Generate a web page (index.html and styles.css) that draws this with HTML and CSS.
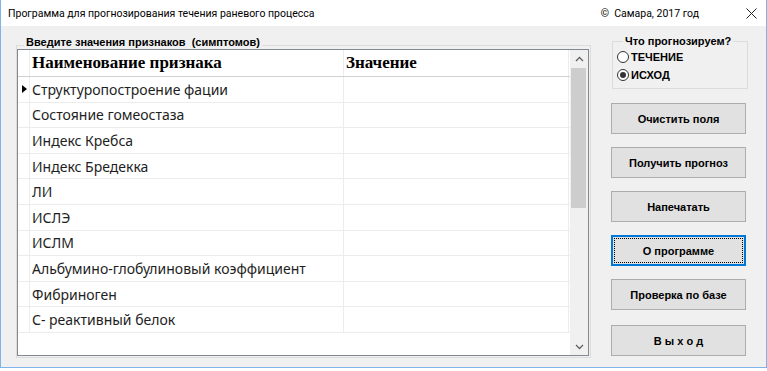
FILE: index.html
```html
<!DOCTYPE html>
<html lang="ru">
<head>
    <meta charset="UTF-8">
    <title>Программа для прогнозирования течения раневого процесса</title>
    <link rel="stylesheet" href="styles.css">
</head>
<body>
<div class="window">
    <div class="titlebar">
        <span class="title">Программа для прогнозирования течения раневого процесса</span>
        <span class="copy">©&nbsp; Самара, 2017 год</span>
        <span class="close">
            <svg width="11" height="11" viewBox="0 0 11 11"><path d="M0.5 0.5 L10.5 10.5 M10.5 0.5 L0.5 10.5" stroke="#222" stroke-width="1"/></svg>
        </span>
    </div>
    <div class="client">
        <fieldset class="group data-group">
            <legend>Введите значения признаков &nbsp;(симптомов)</legend>
            <div class="grid">
                <div class="grid-body">
                    <div class="row head">
                        <div class="ind"></div>
                        <div class="c1">Наименование признака</div>
                        <div class="c2">Значение</div>
                    </div>
                    <div class="row current">
                        <div class="ind"><span class="marker"></span></div>
                        <div class="c1">Структуропостроение фации</div>
                        <div class="c2"></div>
                    </div>
                    <div class="row">
                        <div class="ind"></div>
                        <div class="c1">Состояние гомеостаза</div>
                        <div class="c2"></div>
                    </div>
                    <div class="row">
                        <div class="ind"></div>
                        <div class="c1">Индекс Кребса</div>
                        <div class="c2"></div>
                    </div>
                    <div class="row">
                        <div class="ind"></div>
                        <div class="c1">Индекс Бредекка</div>
                        <div class="c2"></div>
                    </div>
                    <div class="row">
                        <div class="ind"></div>
                        <div class="c1">ЛИ</div>
                        <div class="c2"></div>
                    </div>
                    <div class="row">
                        <div class="ind"></div>
                        <div class="c1">ИСЛЭ</div>
                        <div class="c2"></div>
                    </div>
                    <div class="row">
                        <div class="ind"></div>
                        <div class="c1">ИСЛМ</div>
                        <div class="c2"></div>
                    </div>
                    <div class="row">
                        <div class="ind"></div>
                        <div class="c1">Альбумино-глобулиновый коэффициент</div>
                        <div class="c2"></div>
                    </div>
                    <div class="row">
                        <div class="ind"></div>
                        <div class="c1">Фибриноген</div>
                        <div class="c2"></div>
                    </div>
                    <div class="row">
                        <div class="ind"></div>
                        <div class="c1">С- реактивный белок</div>
                        <div class="c2"></div>
                    </div>
                </div>
                <div class="scrollbar">
                    <div class="arrow">
                        <svg width="9" height="6" viewBox="0 0 9 6"><path d="M1 5 L4.5 1.5 L8 5" fill="none" stroke="#606060" stroke-width="1.3"/></svg>
                    </div>
                    <div class="track"><div class="thumb"></div></div>
                    <div class="arrow">
                        <svg width="9" height="6" viewBox="0 0 9 6"><path d="M1 1 L4.5 4.5 L8 1" fill="none" stroke="#606060" stroke-width="1.3"/></svg>
                    </div>
                </div>
            </div>
        </fieldset>

        <div class="side">
            <fieldset class="group mode">
                <legend>Что прогнозируем?</legend>
                <label class="radio"><span class="dot"></span>ТЕЧЕНИЕ</label>
                <label class="radio checked"><span class="dot"></span>ИСХОД</label>
            </fieldset>
            <div class="buttons">
                <button class="btn">Очистить поля</button>
                <button class="btn">Получить прогноз</button>
                <button class="btn">Напечатать</button>
                <button class="btn focus"><span>О программе</span></button>
                <button class="btn">Проверка по базе</button>
                <button class="btn exit">В ы х о д</button>
            </div>
        </div>
    </div>
</div>
</body>
</html>
```

FILE: styles.css
```css
* {
    margin: 0;
    padding: 0;
    box-sizing: border-box;
}

body {
    background: #fff;
    font-family: "Liberation Sans", Arial, sans-serif;
}

.window {
    width: 767px;
    height: 368px;
    border: 1px solid #7eb4ea;
    border-top: none;
    display: flex;
    flex-direction: column;
}

/* заголовок окна */
.titlebar {
    height: 26px;
    background: #fff;
    display: flex;
    align-items: center;
    font-family: Roboto, sans-serif;
    font-size: 10.5px;
    color: #000;
}

.title {
    padding-left: 7px;
}

.copy {
    margin-left: auto;
}

.close {
    display: flex;
    margin-left: 47px;
    margin-right: 9px;
}

.client {
    flex: 1;
    background: #f0f0f0;
    display: flex;
    align-items: flex-start;
}

/* групбоксы */
.group {
    border: 1px solid #dcdcdc;
    font-size: 11px;
    font-weight: bold;
    color: #000;
}

.group legend {
    line-height: 12px;
    padding: 0 2px;
}

.data-group {
    margin: 10px 0 0 15px;
    width: 575px;
    padding: 0 1px 1px 0;
}

.data-group legend {
    margin-left: 7px;
    padding-bottom: 6px;
}

/* таблица */
.grid {
    margin-top: -5px;
    width: 572px;
    height: 307px;
    border: 1px solid #828790;
    background: #fff;
    display: flex;
}

.grid-body {
    flex: 1;
}

.row {
    display: flex;
    height: 25.6px;
    border-bottom: 1px solid #ececec;
    font-family: "Noto Sans", sans-serif;
    font-size: 14px;
    font-weight: normal;
    color: #1e1e1e;
}

.row.head {
    height: 27px;
    border-bottom-color: #d0d0d0;
    font-family: "Liberation Serif", "Times New Roman", serif;
    font-size: 17px;
    font-weight: bold;
    color: #000;
}

.row > div {
    display: flex;
    align-items: center;
    border-right: 1px solid #ececec;
}

.ind {
    width: 12px;
    justify-content: center;
}

.c1 {
    width: 314px;
    padding-left: 2px;
    white-space: nowrap;
}

.c2 {
    width: 225px;
    padding-left: 2px;
}

.marker {
    width: 0;
    height: 0;
    border-top: 4.5px solid transparent;
    border-bottom: 4.5px solid transparent;
    border-left: 5px solid #000;
    margin-left: 2px;
}

.scrollbar {
    width: 18px;
    background: #f0f0f0;
    display: flex;
    flex-direction: column;
}

.arrow {
    height: 17px;
    display: flex;
    align-items: center;
    justify-content: center;
}

.track {
    flex: 1;
    padding: 1px 2px 0 1px;
}

.thumb {
    height: 140px;
    background: #cdcdcd;
}

/* правая панель */
.side {
    margin-left: 20px;
    width: 137px;
}

.mode {
    margin: 9px 0 0 1px;
    padding: 1px 0 4px 4px;
}

.mode legend {
    margin-left: 6px;
}

.radio {
    display: flex;
    align-items: center;
    height: 18px;
}

.dot {
    width: 12px;
    height: 12px;
    border: 1px solid #333;
    border-radius: 50%;
    background: #fff;
    margin-right: 2px;
    display: flex;
    align-items: center;
    justify-content: center;
}

.radio.checked .dot::after {
    content: "";
    width: 6px;
    height: 6px;
    border-radius: 50%;
    background: #333;
}

.buttons {
    margin-top: 14px;
    display: flex;
    flex-direction: column;
    gap: 13px;
}

.btn {
    width: 135px;
    height: 31px;
    background: #e1e1e1;
    border: 1px solid #adadad;
    font-family: "Liberation Sans", Arial, sans-serif;
    font-size: 11px;
    font-weight: bold;
    color: #000;
    display: flex;
    align-items: center;
    justify-content: center;
}

.btn.focus {
    border: 2px solid #0078d7;
    padding: 1px;
}

.btn.focus span {
    flex: 1;
    align-self: stretch;
    border: 1px dotted #000;
    display: flex;
    align-items: center;
    justify-content: center;
}

.btn.exit {
    margin-top: 2px;
}
```
